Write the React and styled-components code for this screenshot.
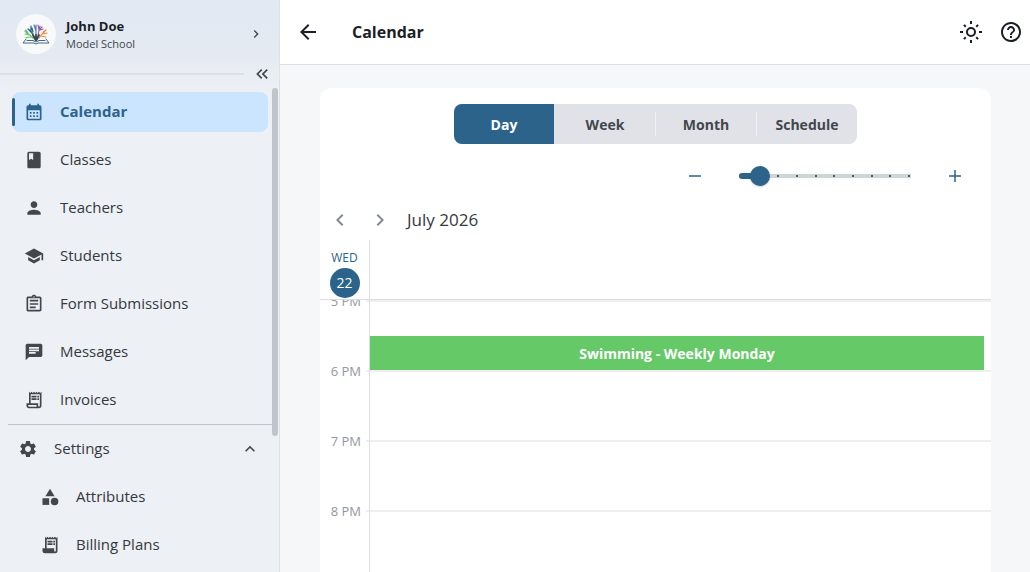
import React, { useState } from "react";
import styled, { createGlobalStyle } from "styled-components";
import {
  MdCalendarMonth,
  MdClass,
  MdPerson,
  MdSchool,
  MdOutlineAssignment,
  MdChat,
  MdOutlineReceiptLong,
  MdSettings,
  MdExpandLess,
  MdCategory,
  MdChevronLeft,
  MdChevronRight,
  MdKeyboardDoubleArrowLeft,
  MdArrowBack,
  MdHelpOutline,
} from "react-icons/md";

const blue = "#2b638b";
const ink = "#1a1f27";
const slate = "#41474d";
const label = "#333940";

const GlobalStyle = createGlobalStyle`
  *, *::before, *::after { box-sizing: border-box; }
  body {
    margin: 0;
    font-family: "Open Sans", "Noto Sans", sans-serif;
    font-size: 14px;
    line-height: 20px;
    color: ${ink};
    background: #f6f7f9;
  }
  button {
    font: inherit;
    color: inherit;
    border: 0;
    padding: 0;
    background: none;
    cursor: pointer;
  }
`;

const Shell = styled.div`
  display: flex;
  height: 100vh;
`;

const Sidebar = styled.aside`
  flex: 0 0 280px;
  display: flex;
  flex-direction: column;
  border-right: 1px solid #dde0e7;
  background: linear-gradient(#e2e9f3 0, #e5eaf2 56px, #edf0f5 92px);
`;

const Profile = styled.button`
  display: flex;
  align-items: center;
  gap: 10px;
  height: 68px;
  padding: 0 15px 0 16px;
  text-align: left;
`;

const Avatar = styled.span`
  display: grid;
  place-items: center;
  width: 40px;
  height: 40px;
  border-radius: 50%;
  background: #f8f9fb;
`;

const ProfileText = styled.span`
  flex: 1;
  display: flex;
  flex-direction: column;
  padding-top: 2px;
`;

const ProfileName = styled.strong`
  font-size: 13px;
  line-height: 18px;
`;

const ProfileSchool = styled.span`
  font-size: 11px;
  line-height: 18px;
  color: ${slate};
`;

const CollapseRow = styled.div`
  display: flex;
  align-items: center;
  gap: 8px;
  height: 20px;
  padding: 0 7px 8px 0;
`;

const CollapseLine = styled.span`
  flex: 1;
  height: 2px;
  background: #dcdfe4;
`;

const CollapseButton = styled.button`
  display: grid;
  color: ${slate};
`;

const NavArea = styled.div`
  flex: 1;
  min-height: 0;
  display: flex;
  padding-right: 1px;
`;

const Nav = styled.nav`
  flex: 1;
  overflow: hidden;
  padding-top: 4px;
  font-size: 15px;
`;

const NavList = styled.ul`
  display: flex;
  flex-direction: column;
  gap: 8px;
  margin: 0;
  padding: 0 4px 4px 12px;
  list-style: none;
`;

const NavLink = styled.a`
  display: flex;
  align-items: center;
  gap: 16px;
  height: 40px;
  padding-left: ${(p) => (p.$nested ? 28 : 9)}px;
  border-radius: 8px;
  text-decoration: none;
  color: ${(p) => (p.$active ? blue : label)};
  font-weight: ${(p) => (p.$active ? 700 : 400)};
  background: ${(p) => (p.$active ? "#cbe5ff" : "none")};

  &::before {
    content: "";
    display: ${(p) => (p.$nested ? "none" : "block")};
    width: 3px;
    height: 28px;
    margin-left: -9px;
    margin-right: -7px;
    border-radius: 2px;
    background: ${(p) => (p.$active ? blue : "transparent")};
  }

  svg {
    color: ${(p) => (p.$active ? blue : slate)};
  }
`;

const NavLabel = styled.span`
  flex: 1;
  padding-bottom: 2px;
`;

const SettingsToggle = styled.button`
  display: flex;
  align-items: center;
  gap: 16px;
  width: 100%;
  height: 48px;
  margin-bottom: 4px;
  padding: 0 12px 0 10px;
  text-align: left;
  color: ${label};

  svg {
    color: ${slate};
  }
`;

const Section = styled.section`
  margin-left: 8px;
  border-top: 1px solid #bfc4c9;

  ${NavList} {
    padding-left: 4px;
  }
`;

const Rail = styled.div`
  width: 6px;
`;

const RailThumb = styled.div`
  height: 72%;
  border-radius: 3px;
  background: #bfc5ca;
`;

const Main = styled.main`
  flex: 1;
  min-width: 0;
  display: flex;
  flex-direction: column;
`;

const TopBar = styled.header`
  display: flex;
  align-items: center;
  height: 65px;
  padding: 0 7px 0 16px;
  border-bottom: 1px solid #dcdfe6;
  background: #fff;
`;

const Title = styled.h1`
  flex: 1;
  margin: 0 0 0 32px;
  font-size: 16px;
  line-height: 24px;
`;

const IconButton = styled.button`
  display: grid;
  place-items: center;
  width: ${(p) => p.$size || 24}px;
  height: ${(p) => p.$size || 24}px;
  color: ${(p) => p.$color || ink};
`;

const TopActions = styled.div`
  display: flex;
  gap: 16px;
`;

const Content = styled.div`
  flex: 1;
  min-height: 0;
  display: flex;
  padding: 23px 39px 0 40px;
`;

const Card = styled.section`
  flex: 1;
  min-width: 0;
  display: flex;
  flex-direction: column;
  padding-top: 16px;
  border-radius: 12px 12px 0 0;
  background: #fff;
`;

const Tabs = styled.div`
  align-self: center;
  display: flex;
  align-items: center;
  height: 40px;
  border-radius: 8px;
  overflow: hidden;
  background: #e1e2e7;
`;

const Tab = styled.button`
  width: 100px;
  height: 40px;
  padding-top: 2px;
  font-weight: 700;
  color: ${(p) => (p.$active ? "#fff" : slate)};
  background: ${(p) => (p.$active ? blue : "none")};
`;

const TabDivider = styled.span`
  width: 1px;
  height: 24px;
  background: ${(p) => (p.$hidden ? "transparent" : "#eff0f4")};
`;

const ZoomRow = styled.div`
  display: flex;
  justify-content: flex-end;
  align-items: center;
  gap: 16px;
  padding: 12px 16px 4px;
`;

const Slider = styled.div`
  display: grid;
  align-items: center;
  width: 188px;

  > * {
    grid-area: 1 / 1;
  }
`;

const Track = styled.div`
  display: flex;
  justify-content: space-between;
  align-items: center;
  height: 4px;
  margin: 0 8px;
  padding: 0 1px;
  background: #cfd5d5;
`;

const Tick = styled.span`
  width: 2px;
  height: 2px;
  background: ${blue};
`;

const Range = styled.input`
  appearance: none;
  width: 100%;
  height: 20px;
  margin: 0;
  background: transparent;

  &::-webkit-slider-thumb {
    appearance: none;
    width: 20px;
    height: 20px;
    border-radius: 50%;
    background: ${blue};
    box-shadow: 0 1px 2px rgba(0, 0, 0, 0.2);
  }
`;

const TrackFill = styled.div`
  height: 6px;
  margin-left: 8px;
  border-radius: 3px;
  background: ${blue};
`;

const MonthRow = styled.div`
  display: flex;
  align-items: center;
  height: 40px;
`;

const MonthLabel = styled.h2`
  margin: 0 0 0 7px;
  font-size: 17px;
  line-height: 24px;
  font-weight: 400;
  color: ${label};
`;

const DayHead = styled.div`
  display: flex;
  height: 60px;
  border-bottom: 1px solid #dcdde1;
`;

const DayCell = styled.div`
  display: flex;
  flex-direction: column;
  align-items: center;
  width: 50px;
  padding-top: 8px;
  border-right: 1px solid #dcdde1;
  font-size: 12px;
  color: ${blue};
`;

const DayNumber = styled.span`
  width: 30px;
  height: 30px;
  border-radius: 50%;
  font-size: 14px;
  line-height: 30px;
  text-align: center;
  color: #fff;
  background: ${blue};
`;

const Hours = styled.div`
  flex: 1;
  min-height: 0;
  overflow: hidden;
`;

const HourRow = styled.div`
  display: flex;
  height: 70px;
`;

const HourCell = styled.div`
  display: flex;
  width: 50px;
  border-right: 1px solid #dcdde1;

  &::after {
    content: "";
    width: 3px;
    height: 2px;
    background: #efeff2;
  }
`;

const HourLabel = styled.span`
  flex: 1;
  margin-top: -9px;
  padding-right: 5px;
  font-size: 13px;
  text-align: right;
  white-space: nowrap;
  color: #9398a0;
`;

const Slot = styled.div`
  flex: 1;
  display: flex;
  align-items: flex-end;
  padding-right: 7px;
  border-top: 2px solid #efeff2;
`;

const Event = styled.button`
  flex: 1;
  height: 34px;
  padding-top: 2px;
  font-weight: 700;
  color: #fff;
  background: #64c966;
`;

const SunIcon = () => (
  <svg width="24" height="24" viewBox="0 0 24 24" fill="none" stroke="currentColor" strokeWidth="2" aria-hidden="true">
    <circle cx="12" cy="12" r="4" />
    <path d="M12 1v3M12 20v3M1 12h3M20 12h3M4.9 4.9l1.9 1.9M17.2 17.2l1.9 1.9M4.9 19.1l1.9-1.9M17.2 6.8l1.9-1.9" />
  </svg>
);

const PlansIcon = () => (
  <svg width="20" height="20" viewBox="0 0 24 24" fill="currentColor" aria-hidden="true">
    <path d="M6 2l1.5 1.5L9 2l1.5 1.5L12 2l1.5 1.5L15 2l1.5 1.5L18 2l1.5 1.5L21 2v17a3 3 0 0 1-3 3H6a3 3 0 0 1-3-3v-3h3V2zm2 3v11h9v3a1 1 0 0 0 2 0V5H8z" />
    <path d="M9 7h6v2H9zM16 7h2v2h-2zM9 10h6v2H9zM16 10h2v2h-2z" />
  </svg>
);

const LineIcon = ({ d, size = 20 }) => (
  <svg width={size} height={size} viewBox="0 0 20 20" fill="none" stroke="currentColor" strokeWidth="1.5" aria-hidden="true">
    <path d={d} />
  </svg>
);

const SchoolLogo = () => (
  <svg width="28" height="24" viewBox="0 0 28 24" fill="none" strokeWidth="1.2" strokeLinecap="round" aria-hidden="true">
    <path d="M11 16L8 13L3 12M7 13L3 9M9 15L4 15.5M6 11L4 8" stroke="#5cc45e" />
    <path d="M12 15L9 9L6 7M9 9L9 4M11 12L7 8M11 10L10 6" stroke="#2b638b" />
    <path d="M14 14V9M14 9L12 3M14 8V3" stroke="#4d7fb0" />
    <path d="M16 14L17 8L16 3M17 8L20 5M18 8L21 7M17 7L18 4" stroke="#9a59ad" />
    <path d="M17 16L20 12L25 11M20 12L24 8M19 14L24 15M21 11L22 9" stroke="#f08a32" />
    <path d="M13.5 18L11 13M14.5 18L17 13M14 17V13" stroke="#38454f" strokeWidth="1.8" />
    <path d="M4 17L1 21H12L14 22L16 21H27L24 17M5 18.500L11 18.500L14 20L17 18.500L23 18.500" stroke="#456b84" strokeWidth="1" />
  </svg>
);

const mainLinks = [
  { name: "Calendar", Icon: MdCalendarMonth, active: true },
  { name: "Classes", Icon: MdClass },
  { name: "Teachers", Icon: MdPerson },
  { name: "Students", Icon: MdSchool },
  { name: "Form Submissions", Icon: MdOutlineAssignment },
  { name: "Messages", Icon: MdChat },
  { name: "Invoices", Icon: MdOutlineReceiptLong },
];

const views = ["Day", "Week", "Month", "Schedule"];
const hours = ["5 PM", "6 PM", "7 PM", "8 PM", "9 PM", "10 PM", "11 PM"];

export default function App() {
  const [view, setView] = useState("Day");
  const [zoom, setZoom] = useState(1);
  const fill = 2 + Math.round((zoom * 168) / 9);

  return (
    <>
      <GlobalStyle />
      <Shell>
        <Sidebar>
          <Profile>
            <Avatar><SchoolLogo /></Avatar>
            <ProfileText>
              <ProfileName>John Doe</ProfileName>
              <ProfileSchool>Model School</ProfileSchool>
            </ProfileText>
            <MdChevronRight size={16} color={slate} />
          </Profile>
          <CollapseRow>
            <CollapseLine />
            <CollapseButton aria-label="Collapse menu"><MdKeyboardDoubleArrowLeft size={20} /></CollapseButton>
          </CollapseRow>
          <NavArea>
            <Nav>
              <NavList>
                {mainLinks.map(({ name, Icon, active }) => (
                  <li key={name}>
                    <NavLink href="#" $active={active}><Icon size={20} /><NavLabel>{name}</NavLabel></NavLink>
                  </li>
                ))}
              </NavList>
              <Section>
                <SettingsToggle aria-expanded="true">
                  <MdSettings size={20} />
                  <NavLabel>Settings</NavLabel>
                  <MdExpandLess size={20} />
                </SettingsToggle>
                <NavList>
                  <li><NavLink href="#" $nested><MdCategory size={20} /><NavLabel>Attributes</NavLabel></NavLink></li>
                  <li><NavLink href="#" $nested><PlansIcon /><NavLabel>Billing Plans</NavLabel></NavLink></li>
                </NavList>
              </Section>
            </Nav>
            <Rail><RailThumb /></Rail>
          </NavArea>
        </Sidebar>
        <Main>
          <TopBar>
            <IconButton aria-label="Back"><MdArrowBack size={24} /></IconButton>
            <Title>Calendar</Title>
            <TopActions>
              <IconButton aria-label="Light mode"><SunIcon /></IconButton>
              <IconButton aria-label="Help"><MdHelpOutline size={24} /></IconButton>
            </TopActions>
          </TopBar>
          <Content>
            <Card>
              <Tabs>
                {views.map((name, i) => (
                  <React.Fragment key={name}>
                    {i > 0 && <TabDivider $hidden={i === 1} />}
                    <Tab $active={view === name} onClick={() => setView(name)}>{name}</Tab>
                  </React.Fragment>
                ))}
              </Tabs>
              <ZoomRow>
                <IconButton $size={40} $color={blue} aria-label="Zoom out" onClick={() => setZoom(Math.max(0, zoom - 1))}>
                  <LineIcon d="M4 10h12" />
                </IconButton>
                <Slider>
                  <Track>
                    {Array.from({ length: 10 }, (_, i) => <Tick key={i} />)}
                  </Track>
                  <TrackFill style={{ width: fill }} />
                  <Range
                    type="range"
                    min="0"
                    max="9"
                    value={zoom}
                    aria-label="Zoom"
                    onChange={(e) => setZoom(Number(e.target.value))}
                  />
                </Slider>
                <IconButton $size={40} $color={blue} aria-label="Zoom in" onClick={() => setZoom(Math.min(9, zoom + 1))}>
                  <LineIcon d="M4 10h12M10 4v12" />
                </IconButton>
              </ZoomRow>
              <MonthRow>
                <IconButton $size={40} $color="#858b93" aria-label="Previous day"><MdChevronLeft size={24} /></IconButton>
                <IconButton $size={40} $color="#858b93" aria-label="Next day"><MdChevronRight size={24} /></IconButton>
                <MonthLabel>July 2026</MonthLabel>
              </MonthRow>
              <DayHead>
                <DayCell>WED<DayNumber>22</DayNumber></DayCell>
              </DayHead>
              <Hours>
                {hours.map((hour) => (
                  <HourRow key={hour}>
                    <HourCell><HourLabel>{hour}</HourLabel></HourCell>
                    <Slot>{hour === "5 PM" && <Event>Swimming - Weekly Monday</Event>}</Slot>
                  </HourRow>
                ))}
              </Hours>
            </Card>
          </Content>
        </Main>
      </Shell>
    </>
  );
}
